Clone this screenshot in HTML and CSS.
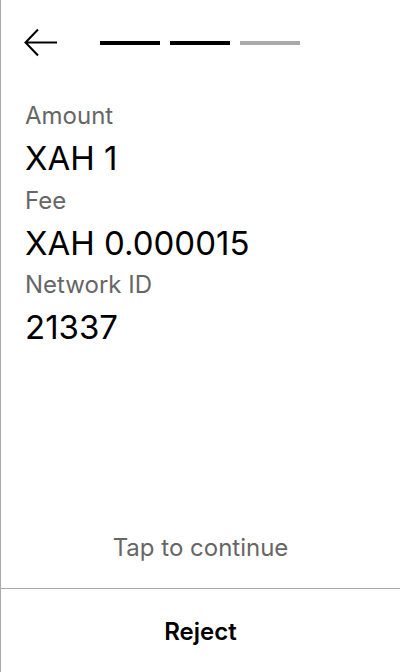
FILE: index.html
```html
<!DOCTYPE html>
<html>
<head>
<meta charset="utf-8">
<link rel="stylesheet" href="styles.css">
</head>
<body>
<div class="screen">
  <header class="header">
    <svg class="back" width="34" height="30" viewBox="0 0 34 30" aria-label="Back">
      <path d="M33 14.5 H2 M14 1.5 L1.5 14.5 L14 27.5" fill="none" stroke="#000" stroke-width="2"/>
    </svg>
    <div class="steps">
      <span class="step done"></span>
      <span class="step done"></span>
      <span class="step"></span>
    </div>
  </header>
  <main class="content">
    <div class="label">Amount</div>
    <div class="value">XAH 1</div>
    <div class="label">Fee</div>
    <div class="value">XAH 0.000015</div>
    <div class="label">Network ID</div>
    <div class="value">21337</div>
  </main>
  <div class="tap">Tap to continue</div>
  <footer class="footer">
    <button class="reject">Reject</button>
  </footer>
</div>
</body>
</html>
```
FILE: styles.css
```css
html, body {
  margin: 0;
  padding: 0;
  background: #fff;
}
body {
  font-family: Inter, "Noto Sans", sans-serif;
  color: #000;
}
.screen {
  width: 400px;
  height: 672px;
  box-sizing: border-box;
  border-left: 1px solid #aaa;
  display: flex;
  flex-direction: column;
}
.header {
  height: 86px;
  display: flex;
  align-items: center;
  padding-left: 23px;
}
.back {
  display: block;
}
.steps {
  display: flex;
  gap: 10px;
  margin-left: 42px;
  margin-top: -1px;
}
.step {
  width: 60px;
  height: 4px;
  background: #aaa;
}
.step.done {
  background: #000;
}
.content {
  flex: 1;
  padding: 11px 24px 0;
}
.label {
  font-size: 24px;
  line-height: 38px;
  color: #666;
}
.value {
  font-size: 33px;
  line-height: 46.5px;
}
.tap {
  text-align: center;
  font-size: 24px;
  line-height: 40px;
  color: #666;
  padding-bottom: 20px;
}
.footer {
  border-top: 1px solid #aaa;
  height: 83px;
  display: flex;
  align-items: center;
  justify-content: center;
}
.reject {
  border: 0;
  background: none;
  padding: 0;
  font-family: inherit;
  font-size: 24px;
  font-weight: 600;
  color: #000;
  line-height: 28px;
  margin-top: 3px;
}
```
